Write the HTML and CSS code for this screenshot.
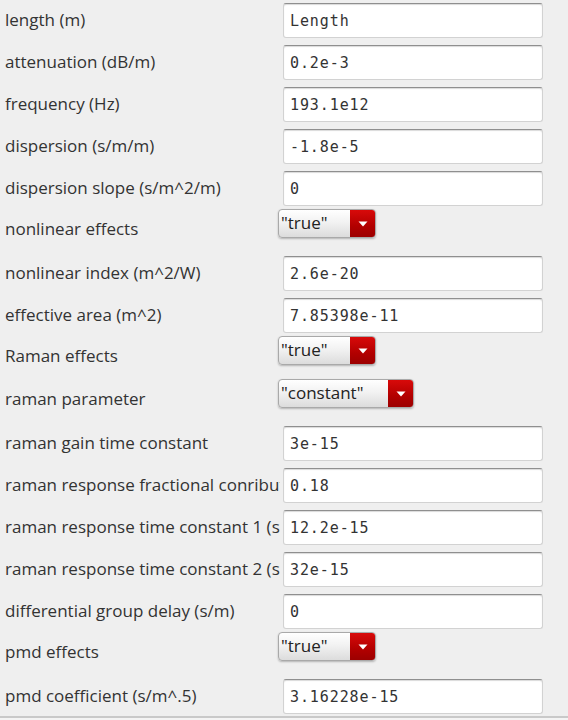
FILE: index.html
```html
<!DOCTYPE html>
<html>
<head>
<meta charset="utf-8">
<link rel="stylesheet" href="styles.css">
</head>
<body>
<div class="form">
  <div class="row"><div class="label">length (m)</div><div class="ctl"><input class="field" value="Length"></div></div>
  <div class="row"><div class="label">attenuation (dB/m)</div><div class="ctl"><input class="field" value="0.2e-3"></div></div>
  <div class="row"><div class="label">frequency (Hz)</div><div class="ctl"><input class="field" value="193.1e12"></div></div>
  <div class="row"><div class="label">dispersion (s/m/m)</div><div class="ctl"><input class="field" value="-1.8e-5"></div></div>
  <div class="row"><div class="label">dispersion slope (s/m^2/m)</div><div class="ctl"><input class="field" value="0"></div></div>
  <div class="row sel-row"><div class="label">nonlinear effects</div><div class="ctl"><div class="select"><span class="val">"true"</span><span class="arrow"><svg width="10" height="6" viewBox="0 0 10 6"><path d="M0.5 0.5 H9.5 L5 5.5 Z" fill="#fff"/></svg></span></div></div></div>
  <div class="row"><div class="label">nonlinear index (m^2/W)</div><div class="ctl"><input class="field" value="2.6e-20"></div></div>
  <div class="row"><div class="label">effective area (m^2)</div><div class="ctl"><input class="field" value="7.85398e-11"></div></div>
  <div class="row sel-row"><div class="label">Raman effects</div><div class="ctl"><div class="select"><span class="val">"true"</span><span class="arrow"><svg width="10" height="6" viewBox="0 0 10 6"><path d="M0.5 0.5 H9.5 L5 5.5 Z" fill="#fff"/></svg></span></div></div></div>
  <div class="row sel-row"><div class="label">raman parameter</div><div class="ctl"><div class="select wide"><span class="val">"constant"</span><span class="arrow"><svg width="10" height="6" viewBox="0 0 10 6"><path d="M0.5 0.5 H9.5 L5 5.5 Z" fill="#fff"/></svg></span></div></div></div>
  <div class="row"><div class="label">raman gain time constant</div><div class="ctl"><input class="field" value="3e-15"></div></div>
  <div class="row"><div class="label">raman response fractional conribution</div><div class="ctl"><input class="field" value="0.18"></div></div>
  <div class="row"><div class="label">raman response time constant 1 (s)</div><div class="ctl"><input class="field" value="12.2e-15"></div></div>
  <div class="row"><div class="label">raman response time constant 2 (s)</div><div class="ctl"><input class="field" value="32e-15"></div></div>
  <div class="row"><div class="label">differential group delay (s/m)</div><div class="ctl"><input class="field" value="0"></div></div>
  <div class="row sel-row"><div class="label">pmd effects</div><div class="ctl"><div class="select"><span class="val">"true"</span><span class="arrow"><svg width="10" height="6" viewBox="0 0 10 6"><path d="M0.5 0.5 H9.5 L5 5.5 Z" fill="#fff"/></svg></span></div></div></div>
  <div class="row last"><div class="label">pmd coefficient (s/m^.5)</div><div class="ctl"><input class="field" value="3.16228e-15"></div></div>
</div>
</body>
</html>
```
FILE: styles.css
```css
html, body {
  margin: 0;
  padding: 0;
  background: #f4f4f4;
}
body {
  font-family: "Open Sans", "DejaVu Sans", sans-serif;
  color: #333;
}
.form {
  background: #efefef;
  border-bottom: 2px solid #c9c9c9;
}
.row {
  display: flex;
  align-items: center;
  height: 42px;
  box-sizing: border-box;
  padding: 3px 0 4px;
}
.row.sel-row {
  height: 43px;
  padding: 0;
}
.row.last {
  height: 40px;
  padding-bottom: 2px;
}
.label {
  flex: 0 0 275px;
  margin-left: 5px;
  margin-bottom: 2px;
  white-space: nowrap;
  overflow: hidden;
  font-size: 17px;
  line-height: 22px;
}
.sel-row .label {
  margin-bottom: 5px;
}
.ctl {
  margin-left: -2px;
  display: flex;
  align-self: stretch;
  align-items: center;
}
.sel-row .ctl {
  align-items: flex-start;
}
.field {
  margin: 0 0 0 5px;
  width: 260px;
  height: 35px;
  box-sizing: border-box;
  border: 1px solid #d2d2d2;
  border-top-color: #8f8f8f;
  border-radius: 3px;
  box-shadow: inset 0 1px 1px rgba(0,0,0,0.15);
  background: #fff;
  padding: 0 6px;
  font-family: "DejaVu Sans Mono", monospace;
  font-size: 15px;
  letter-spacing: 0.9px;
  color: #333;
  outline: none;
}
.select {
  margin-top: -1px;
  display: flex;
  width: 98px;
  height: 29px;
  box-sizing: border-box;
  border: 1px solid #a9a9a9;
  border-radius: 4px;
  background: linear-gradient(#ffffff, #f2f2f2 45%, #dcdcdc);
  box-shadow: 0 1px 2px rgba(0,0,0,0.25);
  overflow: hidden;
}
.select.wide {
  width: 136px;
}
.val {
  flex: 1;
  padding-left: 2px;
  font-size: 17px;
  line-height: 26px;
  color: #222;
  white-space: nowrap;
}
.arrow {
  flex: 0 0 25px;
  display: flex;
  align-items: center;
  justify-content: center;
  background: linear-gradient(#d80a0a, #b20000 60%, #9c0000);
}
```
